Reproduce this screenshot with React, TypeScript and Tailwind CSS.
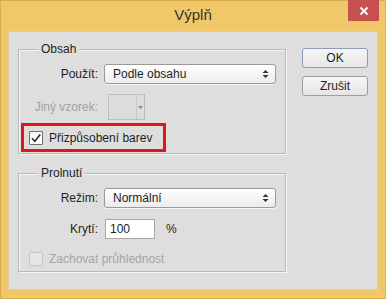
const font = { fontFamily: '"Liberation Sans", Arial, sans-serif' };

const SelectArrows = () => (
  <svg width="7" height="10" viewBox="0 0 7 10" className="shrink-0">
    <path d="M3.5 1 L6.5 4 L0.5 4 Z" fill="#333" />
    <path d="M3.5 9 L6.5 6 L0.5 6 Z" fill="#333" />
  </svg>
);

const Select = ({ value }: { value: string }) => (
  <div className="flex items-center justify-between w-[172px] h-[20px] pl-[8px] pr-[6px] rounded-[3px] border border-[#9a9a9a] bg-gradient-to-b from-[#ffffff] to-[#ececec] text-[12px] text-[#1e1e1e] shadow-[0_1px_0_#f4f4f4]">
    <span>{value}</span>
    <SelectArrows />
  </div>
);

const Checkbox = ({ checked, disabled }: { checked?: boolean; disabled?: boolean }) => (
  <div
    className={
      disabled
        ? "w-[14px] h-[14px] rounded-[2px] border border-[#c4c4c4] bg-[#e6e6e6]"
        : "w-[14px] h-[14px] rounded-[1px] border border-[#6f6f6f] bg-gradient-to-b from-[#f4f4f4] to-[#ffffff] flex items-center justify-center"
    }
  >
    {checked && (
      <svg width="12" height="12" viewBox="0 0 12 12">
        <path d="M2 6.2 L4.8 9.2 L10.2 2.4" fill="none" stroke="#2c2c2c" strokeWidth="1.6" />
      </svg>
    )}
  </div>
);

const Group = ({ title, children, height }: { title: string; children: React.ReactNode; height: string }) => (
  <div className={`relative border border-[#b9b9b9] shadow-[inset_1px_1px_0_#f6f6f6,1px_1px_0_#f6f6f6] ${height}`}>
    <span className="absolute -top-[9px] left-[19px] px-[3px] bg-[#dedede] text-[12px] text-[#1e1e1e] leading-[16px]">
      {title}
    </span>
    {children}
  </div>
);

const Button = ({ label, primary }: { label: string; primary?: boolean }) => (
  <button
    className={`w-[66px] h-[20px] rounded-[3px] border ${
      primary ? "border-[#8d9db3]" : "border-[#9e9e9e]"
    } bg-gradient-to-b from-[#f6f6f6] to-[#e6e6e6] text-[12px] text-[#1e1e1e] leading-none`}
  >
    {label}
  </button>
);

export default function App() {
  return (
    <div style={font} className="w-[386px] h-[299px] bg-[#f0c869] border border-[#d8ad4c] flex flex-col">
      {/* title bar */}
      <div className="relative h-[30px] shrink-0 flex items-center justify-center">
        <span className="text-[15px] text-[#333333] mt-[-1px]">Výplň</span>
        <div className="absolute top-[-1px] right-[6px] w-[31px] h-[21px] bg-[#c75050] flex items-center justify-center">
          <svg width="10" height="10" viewBox="0 0 10 10">
            <path d="M1.5 1.5 L8.5 8.5 M8.5 1.5 L1.5 8.5" stroke="#fff" strokeWidth="1.8" />
          </svg>
        </div>
      </div>

      {/* client area */}
      <div className="mx-[7px] h-[259px] bg-[#dedede] border border-[#e2cf9f] flex">
        <div className="ml-[9px] mt-[17px] w-[268px] flex flex-col gap-[19px]">
          <Group title="Obsah" height="h-[105px]">
            <div className="flex flex-col pl-[1px] pt-[14px]">
              <div className="flex items-center gap-[6px]">
                <span className="w-[78px] text-right text-[12px] text-[#1e1e1e]">Použít:</span>
                <Select value="Podle obsahu" />
              </div>
              <div className="flex items-center gap-[10px] mt-[10px]">
                <span className="w-[78px] text-right text-[12px] text-[#a2a2a2]">Jiný vzorek:</span>
                <div className="flex w-[37px] h-[26px] border border-[#bdbdbd] bg-[#dcdcdc]">
                  <div className="flex-1" />
                  <div className="w-[8px] border-l border-[#c8c8c8] flex items-center justify-center">
                    <svg width="5" height="3" viewBox="0 0 5 3">
                      <path d="M0 0 L5 0 L2.5 3 Z" fill="#8a8a8a" />
                    </svg>
                  </div>
                </div>
              </div>
              <div className="ml-[1px] mt-[3px] w-[145px] h-[29px] border-[3px] border-[#e3141b] flex items-center gap-[6px] pl-[5px]">
                <Checkbox checked />
                <span className="text-[12px] text-[#1e1e1e]">Přizpůsobení barev</span>
              </div>
            </div>
          </Group>

          <Group title="Prolnutí" height="h-[99px]">
            <div className="flex flex-col pl-[1px] pt-[14px]">
              <div className="flex items-center gap-[6px]">
                <span className="w-[78px] text-right text-[12px] text-[#1e1e1e]">Režim:</span>
                <Select value="Normální" />
              </div>
              <div className="flex items-center mt-[11px]">
                <span className="w-[78px] text-right text-[12px] text-[#1e1e1e]">Krytí:</span>
                <div className="ml-[7px] w-[50px] h-[20px] border border-[#a8a8a8] bg-white flex items-center pl-[4px] text-[12px] text-[#1e1e1e]">
                  100
                </div>
                <span className="ml-[11px] text-[12px] text-[#1e1e1e]">%</span>
              </div>
              <div className="flex items-center gap-[6px] mt-[11px] ml-[9px]">
                <Checkbox disabled />
                <span className="text-[12px] text-[#a6a6a6]">Zachovat průhlednost</span>
              </div>
            </div>
          </Group>
        </div>

        <div className="ml-[16px] mt-[16px] flex flex-col gap-[8px]">
          <Button label="OK" primary />
          <Button label="Zrušit" />
        </div>
      </div>
    </div>
  );
}
